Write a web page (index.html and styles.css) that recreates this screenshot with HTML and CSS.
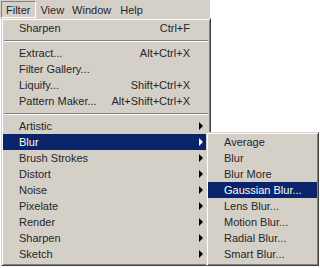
FILE: index.html
```html
<!doctype html>
<html lang="en">
<head>
    <meta charset="UTF-8">
    <title>Filter menu</title>
    <link rel="stylesheet" href="styles.css">
</head>
<body>
    <!--菜单栏-->
    <div class="menubar">
        <span class="top pressed">Filter</span>
        <span class="top view">View</span>
        <span class="top window">Window</span>
        <span class="top">Help</span>
    </div>
    <!--Filter 下拉菜单-->
    <div class="menu main">
        <div class="item"><span class="label">Sharpen</span><span class="key">Ctrl+F</span></div>
        <div class="sep"></div>
        <div class="item"><span class="label">Extract...</span><span class="key">Alt+Ctrl+X</span></div>
        <div class="item"><span class="label">Filter Gallery...</span></div>
        <div class="item"><span class="label">Liquify...</span><span class="key">Shift+Ctrl+X</span></div>
        <div class="item"><span class="label">Pattern Maker...</span><span class="key">Alt+Shift+Ctrl+X</span></div>
        <div class="sep"></div>
        <div class="item sub"><span class="label">Artistic</span></div>
        <div class="item sub active"><span class="label">Blur</span></div>
        <div class="item sub"><span class="label">Brush Strokes</span></div>
        <div class="item sub"><span class="label">Distort</span></div>
        <div class="item sub"><span class="label">Noise</span></div>
        <div class="item sub"><span class="label">Pixelate</span></div>
        <div class="item sub"><span class="label">Render</span></div>
        <div class="item sub"><span class="label">Sharpen</span></div>
        <div class="item sub"><span class="label">Sketch</span></div>
    </div>
    <!--Blur 子菜单-->
    <div class="menu blur">
        <div class="item"><span class="label">Average</span></div>
        <div class="item"><span class="label">Blur</span></div>
        <div class="item"><span class="label">Blur More</span></div>
        <div class="item active"><span class="label">Gaussian Blur...</span></div>
        <div class="item"><span class="label">Lens Blur...</span></div>
        <div class="item"><span class="label">Motion Blur...</span></div>
        <div class="item"><span class="label">Radial Blur...</span></div>
        <div class="item"><span class="label">Smart Blur...</span></div>
    </div>
</body>
</html>
```
FILE: styles.css
```css
body{
    margin: 0;
    background: #fff;
    font-family: "Liberation Sans", Arial, sans-serif;
    font-size: 11px;
    color: #262626;
    position: relative;
    width: 320px;
    height: 268px;
    overflow: hidden;
}
/*菜单栏*/
.menubar{
    width: 210px;
    height: 18px;
    background: #d4d0c8;
    display: flex;
    align-items: stretch;
    padding-top: 1px;
    box-sizing: border-box;
}
.top{
    display: flex;
    align-items: center;
    padding: 0 4px 0 3px;
    border: 1px solid transparent;
}
.view{
    padding-right: 3px;
}
/*按下的 Filter*/
.pressed{
    margin-left: 1px;
    padding: 0 5px 0 4px;
    border-color: #808080 #fff #fff #808080;
}
/*下拉菜单外框*/
.menu{
    background: #d4d0c8;
    border: 1px solid;
    border-color: #d4d0c8 #404040 #404040 #d4d0c8;
    box-shadow: inset 1px 1px #fff, inset -1px -1px #808080;
    padding: 1px;
    box-sizing: border-box;
}
.main{
    margin-left: 1px;
    width: 210px;
    height: 248px;
}
.blur{
    position: absolute;
    left: 206px;
    top: 132px;
    width: 113px;
    height: 134px;
}
.item{
    height: 16px;
    display: flex;
    align-items: center;
    padding: 0 18px 0 16px;
    position: relative;
    white-space: nowrap;
}
.label{
    flex: 1;
}
.key{
    margin-right: 1px;
}
.blur .item{
    padding-left: 16px;
    padding-right: 4px;
}
/*选中项*/
.active{
    background: #0a246a;
    color: #fff;
}
/*子菜单箭头*/
.sub::after{
    content: "";
    position: absolute;
    right: 6px;
    top: 4px;
    border-left: 4px solid #000;
    border-top: 4px solid transparent;
    border-bottom: 4px solid transparent;
}
.sub.active::after{
    border-left-color: #fff;
}
/*分隔线*/
.sep{
    height: 9px;
    margin: 0 1px;
    display: flex;
    flex-direction: column;
    justify-content: center;
}
.sep::before{
    content: "";
    display: block;
    border-top: 1px solid #808080;
    border-bottom: 1px solid #fff;
}
```
